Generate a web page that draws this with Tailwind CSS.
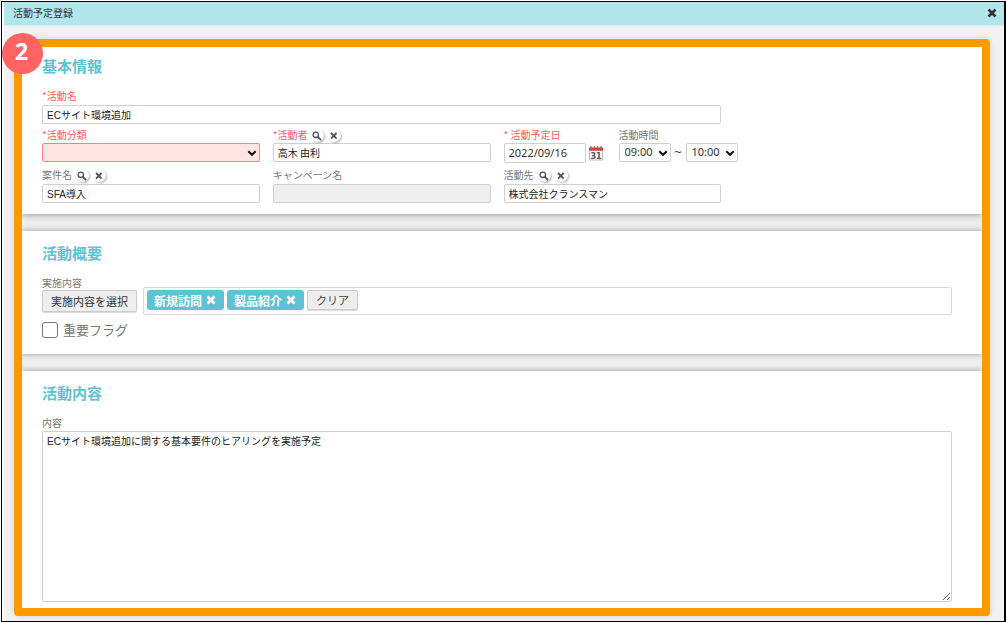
<!DOCTYPE html>
<html lang="ja">
<head>
<meta charset="utf-8">
<title>活動予定登録</title>
<script src="https://cdn.jsdelivr.net/npm/@tailwindcss/browser@4"></script>
</head>
<body class="bg-white font-['Noto_Sans_CJK_JP',sans-serif] text-[10px] text-[#777]">
<svg class="hidden">
  <symbol id="search" viewBox="0 0 12 12"><circle cx="4.8" cy="4.8" r="2.700" fill="none" stroke="#555" stroke-width="1.300"/><path d="M7 7l2.600 2.600" stroke="#555" stroke-width="1.800" stroke-linecap="round"/></symbol>
  <symbol id="cross" viewBox="0 0 12 12"><path d="M2.500 2.500l7 7M9.500 2.500L2.500 9.500" stroke="currentColor" stroke-width="2.700"/></symbol>
  <symbol id="clear" viewBox="0 0 12 12"><path d="M3 3l5.6 5.6M8.6 3L3 8.6" stroke="#555" stroke-width="1.9"/></symbol>
  <symbol id="chevron" viewBox="0 0 10 8"><path d="M1.3 2.2L5 5.8l3.7-3.6" fill="none" stroke="#111" stroke-width="2"/></symbol>
</svg>
<div class="flex min-h-screen flex-col pt-px pl-px">
<div class="flex flex-1 flex-col border border-r-2 border-black pl-[2px]">
  <header class="flex h-[24px] items-center justify-between border-b border-[#d5eef0] bg-[#b3e6eb] pr-[6px] pb-[2px] pl-[9px] text-[#333]">
    <h1 class="leading-[15px]">活動予定登録</h1>
    <button type="button" aria-label="閉じる" class="text-[#333]"><svg class="size-[12px]"><use href="#cross"/></svg></button>
  </header>
  <main class="flex flex-1 flex-col bg-[#f2f2f2] pt-[13px] pr-[14px] pb-[5px] pl-[10px]">
    <form class="relative flex flex-1 flex-col rounded-[4px] border-8 border-[#ff9900] bg-[#eee] shadow-[0_0_6px_rgba(0,0,0,0.12)]">
      <span class="absolute -top-[14px] -left-[20px] z-10 flex size-[41px] items-center justify-center rounded-full bg-[#ff6464] pr-[2px] pb-[4px] font-['Noto_Sans',sans-serif] text-[23px] font-bold text-white">2</span>

      <section class="bg-white pt-[9px] pr-[30px] pb-[11px] pl-[20px] shadow-[0_1px_6px_rgba(0,0,0,0.35)] [clip-path:inset(0_0_-10px_0)]">
        <h2 class="mb-[13px] text-[15px] leading-[20px] font-bold text-[#5ec3d2]">基本情報</h2>
        <div class="grid grid-cols-4 gap-x-[13px]">
          <div class="col-span-3 mb-[4px]">
            <label for="name" class="block pb-[3px] leading-[13px] text-[#ff5c5c]">*活動名</label>
            <input id="name" value="ECサイト環境追加" class="block h-[19px] w-full rounded-[2px] border border-[#d0d0d0] px-[4px] pb-px font-['Liberation_Sans','Noto_Sans_CJK_JP',sans-serif] text-[#222]">
          </div>
          <div class="col-start-1 mb-[6px]">
            <label for="kind" class="block pb-[2px] leading-[13px] text-[#ff5c5c]">*活動分類</label>
            <div class="relative">
              <select id="kind" class="block h-[19px] w-full appearance-none rounded-[2px] border border-[#ff8080] bg-[#ffe4e4] px-[4px] text-[#222]"><option></option></select>
              <svg class="pointer-events-none absolute top-[6px] right-[3px] h-[8px] w-[10px]"><use href="#chevron"/></svg>
            </div>
          </div>
          <div class="mb-[6px]">
            <div class="flex h-[15px] items-center gap-[4px]">
              <label for="person" class="pb-[2px] leading-[13px] text-[#ff5c5c]">*活動者</label>
              <button type="button" aria-label="活動者を検索" class="size-[13px] rounded-full bg-white shadow-[1px_1px_2px_rgba(0,0,0,0.3)]"><svg class="size-[12px]"><use href="#search"/></svg></button>
              <button type="button" aria-label="活動者をクリア" class="size-[13px] rounded-full bg-white shadow-[1px_1px_2px_rgba(0,0,0,0.3)]"><svg class="size-[12px]"><use href="#clear"/></svg></button>
            </div>
            <input id="person" value="高木 由利" class="block h-[19px] w-full rounded-[2px] border border-[#d0d0d0] px-[4px] pb-px text-[#222]">
          </div>
          <div class="col-span-2 mb-[5px] flex items-start">
            <div>
              <label for="date" class="block pb-[2px] leading-[13px] text-[#ff5c5c]">* 活動予定日</label>
              <div class="flex items-center gap-[3px]">
                <input id="date" value="2022/09/16" class="block h-[20px] w-[82px] rounded-[2px] border border-[#d0d0d0] px-[4px] pb-px font-['Noto_Sans',sans-serif] text-[11px] text-[#333]">
                <button type="button" aria-label="カレンダー">
                  <svg class="h-[15px] w-[14px]" viewBox="0 0 14 15"><path d="M.5 4.5h13v9.500H.5z" fill="#f6f6f6" stroke="#bbb"/><path d="M0 1.500h14v3H0z" fill="#e2382e"/><path d="M2 0v2.500M5.300 0v2.500M8.700 0v2.500M12 0v2.500" stroke="#777" stroke-width="1.200"/><text x="7" y="12.500" text-anchor="middle" font-family="DejaVu Sans" font-weight="bold" font-size="8" fill="#555">31</text></svg>
                </button>
              </div>
            </div>
            <fieldset class="ml-[16px]">
              <legend class="pb-[2px] leading-[13px]">活動時間</legend>
              <div class="flex items-center text-[#333]">
                <div class="relative">
                  <select aria-label="開始時刻" class="block h-[19px] w-[52px] appearance-none rounded-[2px] border border-[#d0d0d0] bg-white pl-[5px] font-['Noto_Sans',sans-serif] text-[11px]"><option>09:00</option></select>
                  <svg class="pointer-events-none absolute top-[6px] right-[3px] h-[8px] w-[10px]"><use href="#chevron"/></svg>
                </div>
                <span class="w-[15px] text-center font-['Noto_Sans',sans-serif] text-[13px] leading-[19px]">~</span>
                <div class="relative">
                  <select aria-label="終了時刻" class="block h-[19px] w-[52px] appearance-none rounded-[2px] border border-[#d0d0d0] bg-white pl-[5px] font-['Noto_Sans',sans-serif] text-[11px]"><option>10:00</option></select>
                  <svg class="pointer-events-none absolute top-[6px] right-[3px] h-[8px] w-[10px]"><use href="#chevron"/></svg>
                </div>
              </div>
            </fieldset>
          </div>
          <div class="col-start-1">
            <div class="mb-px flex h-[15px] items-center gap-[4px]">
              <label for="deal" class="pb-[2px] leading-[13px]">案件名</label>
              <button type="button" aria-label="案件を検索" class="size-[13px] rounded-full bg-white shadow-[1px_1px_2px_rgba(0,0,0,0.3)]"><svg class="size-[12px]"><use href="#search"/></svg></button>
              <button type="button" aria-label="案件をクリア" class="size-[13px] rounded-full bg-white shadow-[1px_1px_2px_rgba(0,0,0,0.3)]"><svg class="size-[12px]"><use href="#clear"/></svg></button>
            </div>
            <input id="deal" value="SFA導入" class="block h-[19px] w-full rounded-[2px] border border-[#d0d0d0] px-[4px] pb-px font-['Liberation_Sans','Noto_Sans_CJK_JP',sans-serif] text-[#222]">
          </div>
          <div>
            <label for="campaign" class="block pb-[3px] leading-[13px]">キャンペーン名</label>
            <input id="campaign" disabled class="block h-[19px] w-full rounded-[2px] border border-[#d0d0d0] bg-[#eee] px-[4px]">
          </div>
          <div>
            <div class="mb-px flex h-[15px] items-center gap-[4px]">
              <label for="client" class="pb-[2px] leading-[13px]">活動先</label>
              <button type="button" aria-label="活動先を検索" class="size-[13px] rounded-full bg-white shadow-[1px_1px_2px_rgba(0,0,0,0.3)]"><svg class="size-[12px]"><use href="#search"/></svg></button>
              <button type="button" aria-label="活動先をクリア" class="size-[13px] rounded-full bg-white shadow-[1px_1px_2px_rgba(0,0,0,0.3)]"><svg class="size-[12px]"><use href="#clear"/></svg></button>
            </div>
            <input id="client" value="株式会社クランスマン" class="block h-[19px] w-full rounded-[2px] border border-[#d0d0d0] px-[4px] pb-px text-[#222]">
          </div>
        </div>
      </section>

      <section class="mt-[17px] bg-white pt-[12px] pr-[30px] pb-[16px] pl-[20px] shadow-[0_0_6px_rgba(0,0,0,0.35)] [clip-path:inset(-10px_0)]">
        <h2 class="mb-[13px] text-[15px] leading-[20px] font-bold text-[#5ec3d2]">活動概要</h2>
        <div class="flex items-end gap-[6px]">
          <div class="pb-[3px]">
            <div class="leading-[14px]">実施内容</div>
            <button type="button" class="block h-[22px] rounded-[2px] border border-[#ccc] bg-[#eee] px-[8px] text-[11px] leading-[20px] text-[#333] shadow-[0_1px_1px_rgba(0,0,0,0.15)]">実施内容を選択</button>
          </div>
          <div class="flex h-[28px] flex-1 items-start gap-[3px] rounded-[2px] border border-[#d8d8d8] px-[3px] pt-[2px]">
            <span class="flex h-[20px] items-center gap-[3px] rounded-[3px] bg-[#5ec3d2] px-[7px] text-[12px] leading-[19px] font-bold text-white">新規訪問<button type="button" aria-label="新規訪問を削除"><svg class="size-[12px]"><use href="#cross"/></svg></button></span>
            <span class="flex h-[20px] items-center gap-[3px] rounded-[3px] bg-[#5ec3d2] px-[7px] text-[12px] leading-[19px] font-bold text-white">製品紹介<button type="button" aria-label="製品紹介を削除"><svg class="size-[12px]"><use href="#cross"/></svg></button></span>
            <button type="button" class="h-[20px] rounded-[2px] border border-[#ccc] bg-[#eee] px-[8px] text-[11px] leading-[18px] text-[#444] shadow-[0_1px_1px_rgba(0,0,0,0.15)]">クリア</button>
          </div>
        </div>
        <div class="mt-[7px] flex h-[16px] items-center gap-[5px]">
          <input id="flag" type="checkbox" class="size-[16px] appearance-none rounded-[3px] border border-[#767676] bg-white">
          <label for="flag" class="text-[13px] leading-[16px]">重要フラグ</label>
        </div>
      </section>

      <section class="mt-[17px] flex flex-1 flex-col bg-white pt-[12px] pr-[30px] pb-[6px] pl-[20px] shadow-[0_0_6px_rgba(0,0,0,0.35)] [clip-path:inset(-10px_0_0_0)]">
        <h2 class="mb-[13px] text-[15px] leading-[20px] font-bold text-[#5ec3d2]">活動内容</h2>
        <label for="body" class="pb-[2px] leading-[13px]">内容</label>
        <textarea id="body" class="w-full flex-1 resize rounded-[2px] border border-[#d0d0d0] px-[4px] py-[2px] font-['Liberation_Sans','Noto_Sans_CJK_JP',sans-serif] leading-[15px] text-[#222]">ECサイト環境追加に関する基本要件のヒアリングを実施予定</textarea>
      </section>
    </form>
  </main>
</div>
</div>
</body>
</html>
